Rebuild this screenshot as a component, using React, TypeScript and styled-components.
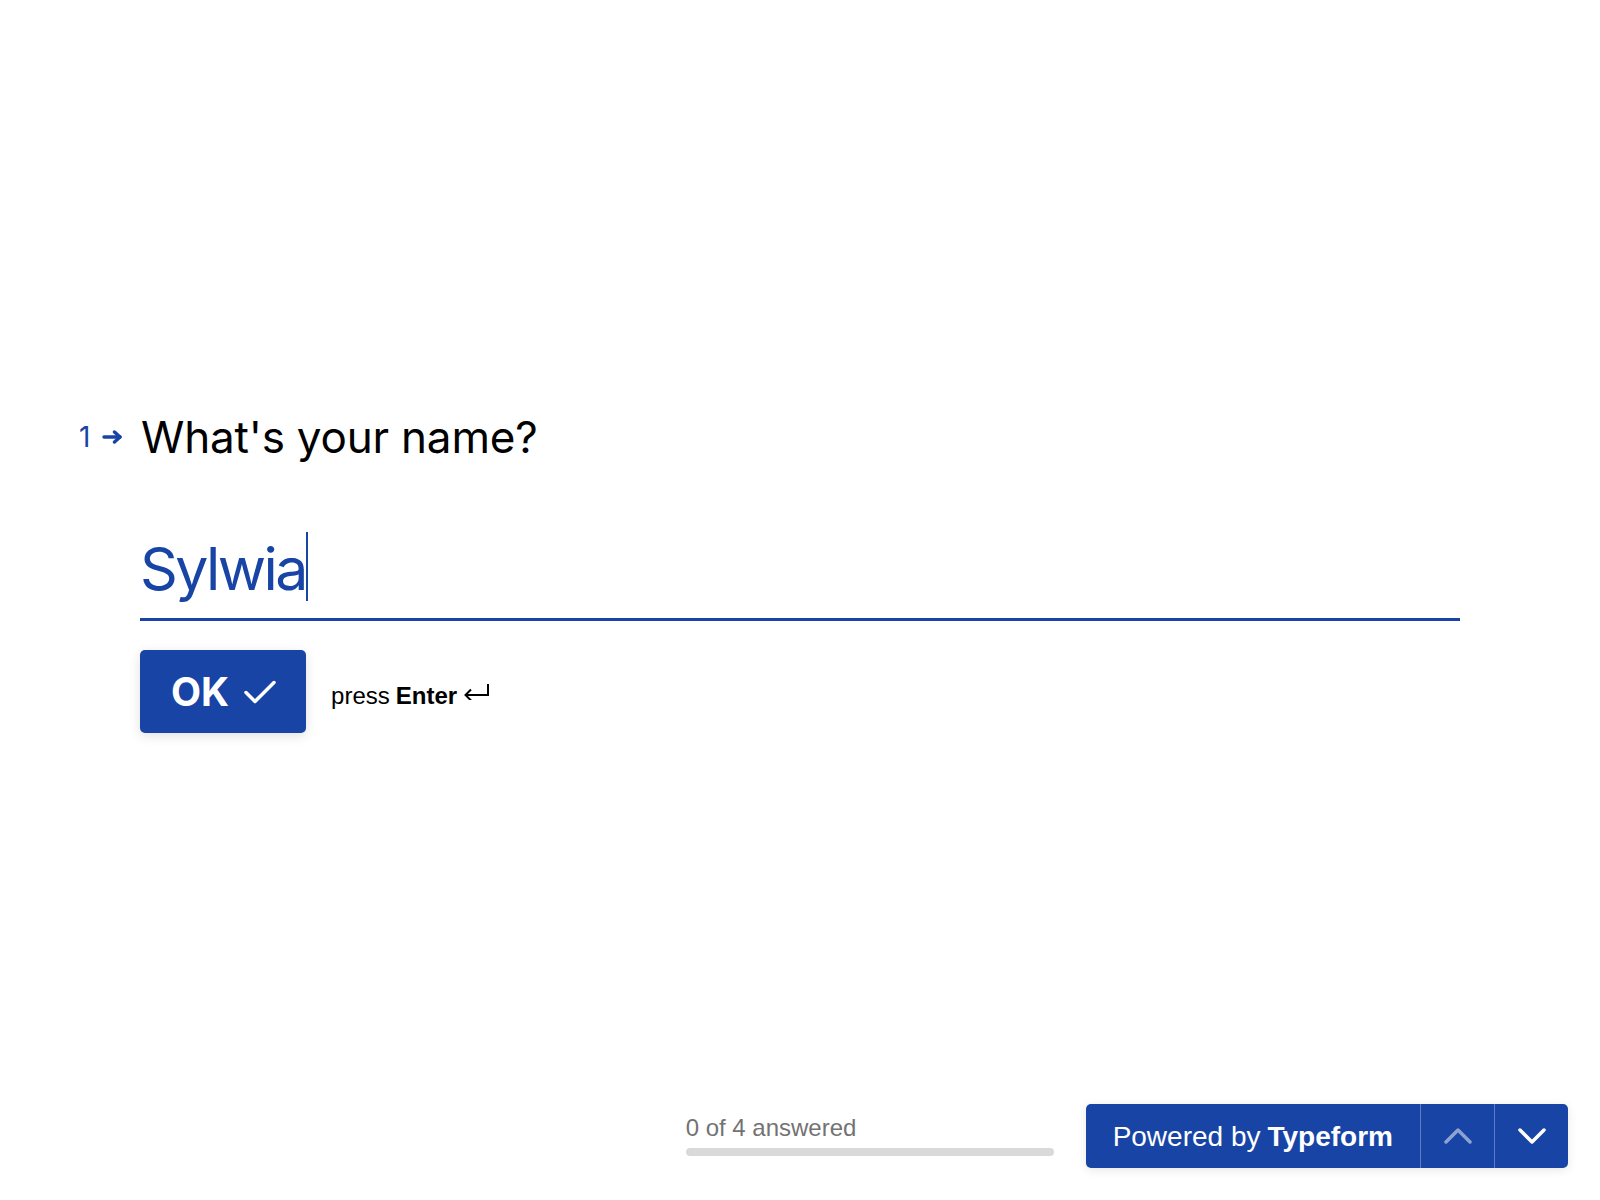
import React from "react";
import styled, { createGlobalStyle } from "styled-components";

const BLUE = "#1844a6";

const Global = createGlobalStyle`
  html, body, #root { margin: 0; padding: 0; height: 100%; background: #ffffff; }
  body { font-family: Inter, "Noto Sans", sans-serif; -webkit-font-smoothing: antialiased; }
  * { box-sizing: border-box; }
`;

const Page = styled.div`
  height: 100vh;
  display: flex;
  flex-direction: column;
  background: #fff;
`;

const Main = styled.main`
  flex: 1;
  padding: 406px 140px 0 79px;
`;

const QuestionRow = styled.div`
  display: flex;
  align-items: center;
`;

const Counter = styled.div`
  width: 62px;
  display: flex;
  align-items: center;
  gap: 12px;
  color: ${BLUE};
  font-family: Inter, sans-serif;
  font-size: 28px;
  line-height: 32px;
`;

const Title = styled.h1`
  margin: 0;
  font-family: Inter, sans-serif;
  font-weight: 400;
  font-size: 44px;
  line-height: 62px;
  letter-spacing: -0.2px;
  color: #000;
`;

const Answer = styled.div`
  margin-left: 61px;
  margin-top: 65px;
`;

const InputLine = styled.div`
  display: flex;
  align-items: flex-start;
  padding-bottom: 13px;
  border-bottom: 3px solid ${BLUE};
`;

const InputText = styled.span`
  font-family: Inter, sans-serif;
  font-size: 59px;
  line-height: 72px;
  letter-spacing: -2.6px;
  color: ${BLUE};
`;

const Caret = styled.span`
  display: block;
  width: 2px;
  height: 69px;
  margin-top: -1px;
  margin-left: 0;
  background: ${BLUE};
`;

const Actions = styled.div`
  display: flex;
  align-items: center;
  gap: 25px;
  margin-top: 29px;
`;

const OkButton = styled.button`
  height: 83px;
  padding: 0 30px 0 31px;
  display: flex;
  align-items: center;
  gap: 15px;
  border: none;
  border-radius: 5px;
  background: ${BLUE};
  color: #fff;
  font-family: Inter, sans-serif;
  font-weight: 700;
  font-size: 39px;
  line-height: 1;
  box-shadow: 0 3px 12px rgba(0, 0, 0, 0.12);
  cursor: pointer;
`;

const Hint = styled.div`
  display: flex;
  align-items: center;
  padding-top: 8px;
  font-family: "Liberation Sans", Arial, sans-serif;
  font-size: 24px;
  line-height: 28px;
  color: #000;
  b { font-weight: 700; margin-left: 6px; }
  svg { margin-left: 6px; margin-bottom: 8px; }
`;

const Footer = styled.footer`
  display: flex;
  justify-content: flex-end;
  align-items: flex-end;
  gap: 32px;
  padding: 0 32px 32px;
`;

const Progress = styled.div`
  width: 368px;
  margin-bottom: 12px;
`;

const ProgressLabel = styled.div`
  font-family: "Liberation Sans", Arial, sans-serif;
  font-size: 24px;
  line-height: 28px;
  color: #737373;
`;

const Track = styled.div`
  margin-top: 6px;
  height: 8px;
  border-radius: 4px;
  background: #d9d9d9;
  overflow: hidden;
`;

const Fill = styled.div`
  height: 100%;
  background: ${BLUE};
`;

const NavGroup = styled.div`
  display: flex;
  height: 64px;
  border-radius: 5px;
  background: ${BLUE};
  box-shadow: 0 2px 10px rgba(0, 0, 0, 0.1);
  overflow: hidden;
`;

const Brand = styled.a`
  display: flex;
  align-items: center;
  padding: 2px 27px 0;
  font-family: "Liberation Sans", Arial, sans-serif;
  font-size: 28px;
  line-height: 1;
  color: #fff;
  text-decoration: none;
  b { font-weight: 700; margin-left: 0.25em; }
`;

const NavButton = styled.button<{ $dim?: boolean }>`
  width: 74px;
  display: flex;
  align-items: center;
  justify-content: center;
  border: none;
  border-left: 1px solid rgba(255, 255, 255, 0.3);
  background: transparent;
  padding: 0;
  cursor: pointer;
  svg { opacity: ${(p) => (p.$dim ? 0.5 : 1)}; }
`;

export default function App() {
  return (
    <Page>
      <Global />
      <Main>
        <QuestionRow>
          <Counter>
            <span>1</span>
            <svg width="21" height="14" viewBox="0 0 21 14" fill="none" stroke={BLUE} strokeWidth="3.4" strokeLinecap="round" strokeLinejoin="round">
              <path d="M2 7H18" />
              <path d="M12.5 2L18 7L12.5 12" />
            </svg>
          </Counter>
          <Title>What's your name?</Title>
        </QuestionRow>
        <Answer>
          <InputLine>
            <InputText>Sylwia</InputText>
            <Caret />
          </InputLine>
          <Actions>
            <OkButton>
              <span>OK</span>
              <svg width="32" height="24" viewBox="0 0 32 24" fill="none" stroke="#fff" strokeWidth="3.5" strokeLinecap="round" strokeLinejoin="round">
                <path d="M2 12.5L11 21.5L30 2.5" />
              </svg>
            </OkButton>
            <Hint>
              press<b>Enter</b>
              <svg width="27" height="16" viewBox="0 0 27 16" fill="none" stroke="#000" strokeWidth="2" strokeLinejoin="miter">
                <path d="M25 0V11H3" />
                <path d="M8 5.5L2.5 11L8 16.5" />
              </svg>
            </Hint>
          </Actions>
        </Answer>
      </Main>
      <Footer>
        <Progress>
          <ProgressLabel>0 of 4 answered</ProgressLabel>
          <Track>
            <Fill style={{ width: "0%" }} />
          </Track>
        </Progress>
        <NavGroup>
          <Brand href="#">
            Powered by<b>Typeform</b>
          </Brand>
          <NavButton $dim aria-label="Previous">
            <svg width="28" height="16" viewBox="0 0 28 16" fill="none" stroke="#fff" strokeWidth="3.5" strokeLinecap="round" strokeLinejoin="round">
              <path d="M2 14L14 2L26 14" />
            </svg>
          </NavButton>
          <NavButton aria-label="Next">
            <svg width="28" height="16" viewBox="0 0 28 16" fill="none" stroke="#fff" strokeWidth="3.5" strokeLinecap="round" strokeLinejoin="round">
              <path d="M2 2L14 14L26 2" />
            </svg>
          </NavButton>
        </NavGroup>
      </Footer>
    </Page>
  );
}
